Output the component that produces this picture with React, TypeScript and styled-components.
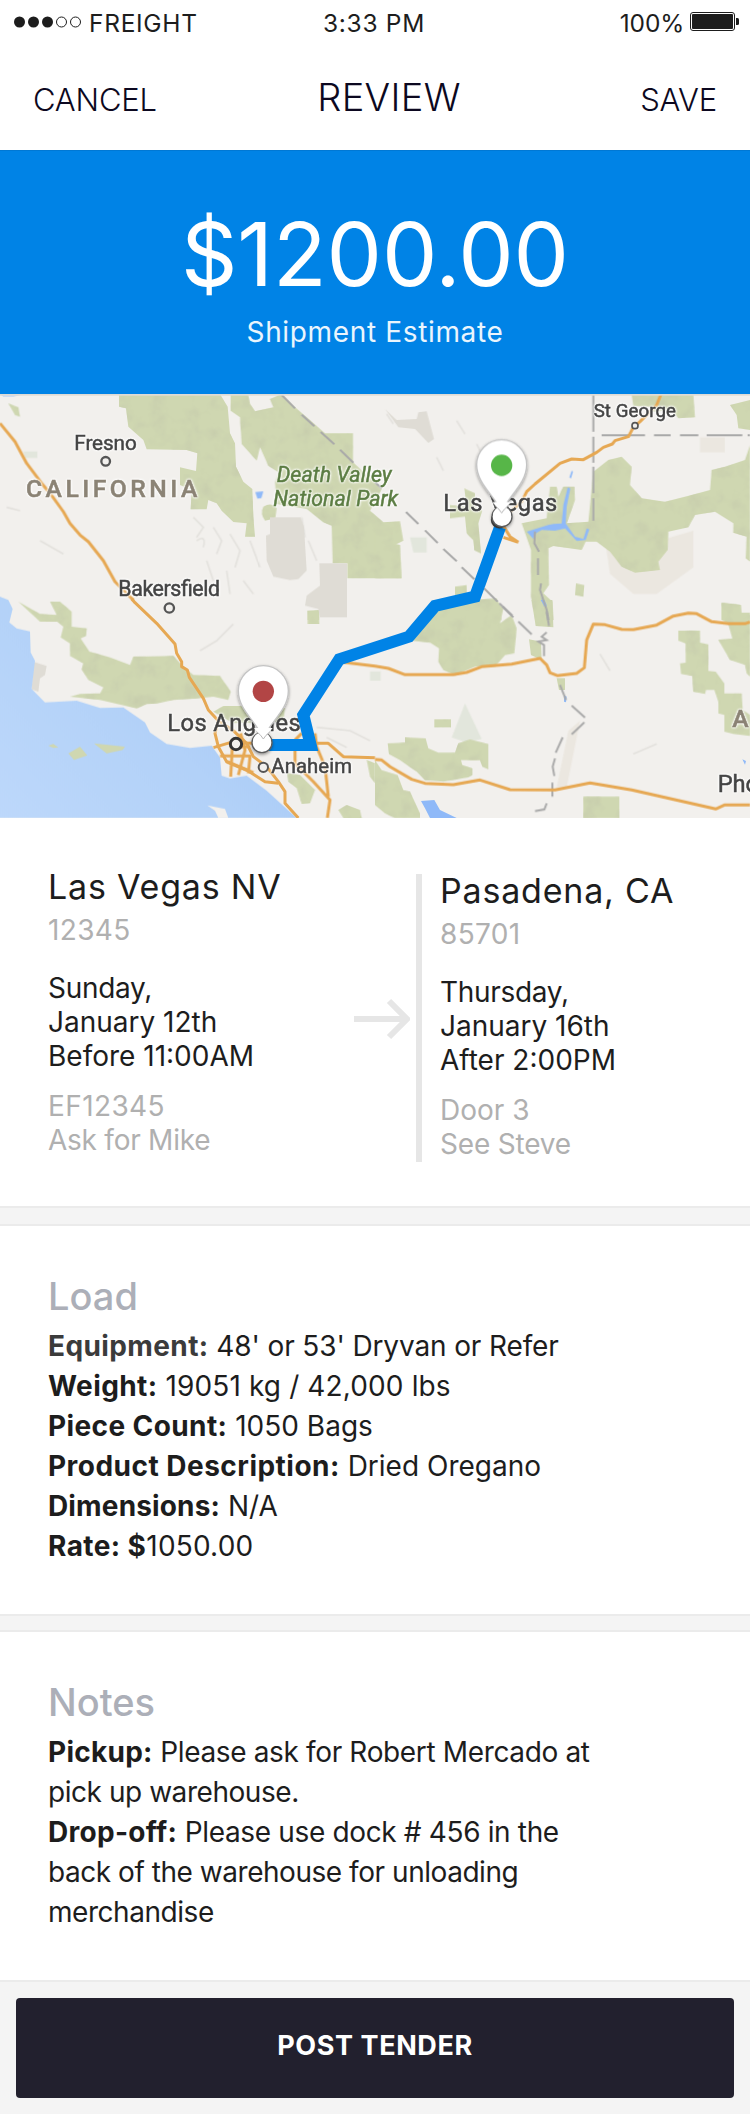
import React from 'react'
import styled, { createGlobalStyle } from 'styled-components'

const GlobalStyle = createGlobalStyle`
  body {
    margin: 0;
    background: #f4f4f4;
  }
  *, *::before, *::after {
    box-sizing: border-box;
  }
`

const Screen = styled.div`
  width: 750px;
  min-height: 2114px;
  display: flex;
  flex-direction: column;
  background: #f4f4f4;
  color: #1d1d1d;
  font-family: Inter, "Liberation Sans", sans-serif;
  font-size: 28px;
  line-height: 40px;
`

/* ---------- top bars ---------- */

const StatusBar = styled.div`
  display: grid;
  grid-template-columns: 1fr auto 1fr;
  align-items: center;
  height: 46px;
  padding: 0 11px 0 14px;
  background: #fff;
  font-size: 24.5px;
  line-height: 46px;
  letter-spacing: 0.7px;
`
const Carrier = styled.div`
  display: flex;
  align-items: center;
  gap: 7px;
`
const Clock = styled.span`
  margin-right: 5px;
`
const Power = styled.div`
  display: flex;
  align-items: center;
  justify-content: flex-end;
  gap: 6px;
  letter-spacing: -0.2px;
`
const StatusIcon = styled.svg`
  display: block;
  margin-bottom: 3px;
`

const NavBar = styled.nav`
  display: grid;
  grid-template-columns: 1fr auto 1fr;
  align-items: baseline;
  height: 104px;
  padding: 31px 33px 0;
  background: #fff;
  color: #0c0820;
`
const NavAction = styled.span<{ $right?: boolean }>`
  font-size: 31px;
  font-weight: 300;
  letter-spacing: -0.2px;
  text-align: ${({ $right }) => ($right ? 'right' : 'left')};
`
const NavTitle = styled.h1`
  margin: 0;
  padding-left: 28px;
  font-size: 38px;
  font-weight: 300;
  letter-spacing: 0.3px;
`

/* ---------- estimate ---------- */

const Estimate = styled.section`
  display: flex;
  flex-direction: column;
  align-items: center;
  height: 244px;
  padding-top: 54px;
  border-top: 1px solid #0078d4;
  background: #0083e6;
  color: #fff;
`
const Amount = styled.div`
  font-size: 88px;
  line-height: 98px;
  letter-spacing: -0.1px;
`
const AmountLabel = styled.div`
  margin-top: 9px;
  font-size: 28px;
  letter-spacing: 0.65px;
  color: #eaf5fd;
`

const MapFrame = styled.svg`
  display: block;
  width: 750px;
  height: 424px;
`

/* ---------- stops ---------- */

const Stops = styled.section`
  display: flex;
  align-items: flex-start;
  height: 388px;
  padding: 49px 48px 0;
  background: #fff;
`
const Stop = styled.div<{ $last?: boolean }>`
  width: ${({ $last }) => ($last ? '260px' : '306px')};
  margin: ${({ $last }) => ($last ? '4px 0 0 18px' : '0')};
  line-height: 34px;
`
const City = styled.h2`
  margin: 0 0 6px;
  font-size: 34px;
  font-weight: 400;
  line-height: 40px;
  letter-spacing: 0.8px;
`
const Muted = styled.div<{ $track?: number }>`
  color: #b0b0b0;
  letter-spacing: ${({ $track }) => $track ?? 0}px;
`
const When = styled.div`
  margin: 24px 0 16px;
`
const Day = styled.div`
  letter-spacing: -0.3px;
`
const StopArrow = styled.svg`
  display: block;
  margin-top: 131px;
`
const StopRule = styled.div`
  width: 6px;
  height: 288px;
  margin: 7px 0 0 6px;
  background: #e6e6e6;
`

/* ---------- detail cards ---------- */

const Card = styled.section`
  padding: 47px 48px 48px;
  background: #fff;
`
const Divider = styled.div<{ $tall?: boolean }>`
  height: ${({ $tall }) => ($tall ? '20px' : '18px')};
  flex: none;
  border: solid #ebebeb;
  border-width: 2px 0;
  background: #f4f4f4;
`
const CardTitle = styled.h2`
  margin: 0 0 7px;
  font-size: 38px;
  font-weight: 500;
  line-height: 46px;
  letter-spacing: 0;
  color: #acafb8;
`
const Line = styled.p<{ $track?: number }>`
  margin: 0;
  letter-spacing: ${({ $track }) => $track ?? 0}px;
  white-space: nowrap;
`
const Label = styled.strong<{ $soft?: boolean; $track?: number }>`
  font-weight: 700;
  letter-spacing: ${({ $track }) => $track ?? 0.4}px;
  color: ${({ $soft }) => ($soft ? '#3b3b3b' : 'inherit')};
`

const Footer = styled.footer`
  padding: 16px;
  border-top: 2px solid #ebebeb;
`
const PostButton = styled.button`
  display: block;
  width: 718px;
  height: 100px;
  border: 0;
  border-radius: 4px;
  background: #22202e;
  color: #fff;
  font: 700 27px/96px Inter, "Liberation Sans", sans-serif;
  letter-spacing: 0.6px;
  padding: 0 0 4px;
`

/* ---------- map ---------- */

// Map units are a third of a pixel. Shapes are grouped by quarter sheet.
const sheets = {
  nw: 'translate(0 -12)',
  ne: 'translate(1125 -12)',
  mid: 'translate(630 0)',
  sw: 'translate(0 618)',
  se: 'translate(1125 618)',
}
type Shape = [keyof typeof sheets, string]

const parks: Shape[] = [
  ['nw', 'M357 12H660L683 50L690 130L705 160L708 230L730 275L757 297L760 380L765 440H735L740 400L700 396L665 362L650 340L625 330L620 358H572L575 300L540 285V232L588 243L592 190L560 180L440 178L430 150L385 110L378 55L357 50Z'],
  ['nw', 'M25 40L55 52L60 80L45 75Z'],
  ['nw', 'M790 350Q815 335 830 355L826 385L795 392Q780 370 790 350Z'],
  ['nw', 'M922 662L958 660V690H922Z'],
  ['mid', 'M62 0H114L120 30L135 52L190 40L180 15L215 0L250 35L345 118H429V205L515 285L480 350L520 385L570 382L580 440L550 455V485L572 515L574 553H412V508H368L365 395L340 385L290 345L200 330L195 265L205 235L175 215L150 160L140 200L95 150L90 70L62 50Z'],
  ['mid', 'M293 652L326 650L328 690H293Z'],
  ['ne', 'M0 385L15 400L50 397L53 460L75 465L80 565H0Z'],
  ['ne', 'M268 295L300 310L298 350L322 362L310 400L318 490L298 480L295 450L275 430L270 380L225 385V345L275 350Z'],
  ['ne', 'M770 12H955L960 82L910 85L890 60L835 65L830 50L775 48Z'],
  ['ne', 'M1065 45L1125 30V120L1090 115L1085 75Z'],
  ['ne', 'M655 245L700 210L740 200L770 230L765 285L800 325L870 335L950 315L1005 300L1010 240L1050 230L1110 210L1125 165V515L1112 505L1115 440L1075 428V400L1020 365L960 375L940 412L880 425L878 480L850 515L855 540L780 548L740 530L705 485L665 455L632 455L620 480L535 468L520 475L522 585L505 610L532 635L535 690H482L468 620V480L440 400L515 385L525 290L545 290L550 320L565 290H598L600 330L575 400L640 395Z'],
  ['ne', 'M240 590L275 585V612L240 618ZM603 580L628 585L625 620L600 615Z'],
  ['ne', 'M180 690L190 650L300 630L365 625L380 690Z'],
  ['ne', 'M1040 640L1098 645L1100 672L1125 675V690H1040Z'],
  ['se', 'M185 30L300 5L365 0L385 25L375 70L410 45L425 85L418 160L390 165L360 200L300 200L240 225L205 210L190 185L192 145L165 128L110 122Z'],
  ['se', 'M470 0H532L535 82L482 78ZM462 118L498 125L500 180L468 165ZM545 235H570V270H552Z'],
  ['se', 'M1040 8L1095 15V38H1125V230L1115 220L1110 195L1065 180L1030 120L1072 115L1060 72L1040 60Z'],
  ['se', 'M910 92H975V128L1000 133V213L1022 215L1048 250V280H1100L1103 330L1125 345V408L1075 402L1048 395V345L1030 340V305L1018 270H993L990 282L955 275L952 228L918 222L915 190L932 188V130L910 122Z'],
  ['se', 'M178 358H228V382H178ZM625 590H733V654H625Z'],
  ['se', 'M38 430L90 428V412L152 415L160 445L190 458H240L250 430L285 418L340 432V508L322 500L315 480H258L262 495L292 505V525L280 532L205 545L150 540L125 515L75 480L42 462Z'],
  ['se', 'M0 480L20 510L68 525L85 570L105 575L135 640V654H60L30 640L0 615Z'],
  ['sw', 'M55 5L120 42L170 45L150 5H180L215 35V80L260 85L258 108L242 115L268 155L330 172L390 195L400 170L520 168L550 200L580 225L660 228L692 275L685 300L640 290L590 295L520 300L470 310L440 312L410 325L300 300L210 290L240 282L300 280L310 262L265 240L245 208L250 190L210 168V130L182 112L190 80L172 65L120 65Z'],
  ['sw', 'M640 335L670 318H760L855 325L850 365L700 370Z'],
  ['sw', 'M862 520L900 525L945 570L930 610L905 612L890 565L865 545ZM1015 630L1040 615L1080 630L1085 654H1030ZM1100 480L1125 490V550L1110 530Z'],
]

const islands: Shape[] = [
  ['sw', 'M205 460L240 440L262 466L222 480ZM282 430L375 440L368 450L320 460ZM145 437L160 432L175 442L160 444Z'],
]

const desert: Shape[] = [
  ['mid', 'M180 370H272L282 400L290 530L265 555L240 558L190 548L170 500L168 425L180 420Z'],
  ['mid', 'M328 508H411V670H330L325 645L285 635L290 605L330 575Z'],
  ['mid', 'M525 45L560 78L620 75L625 55L650 52L672 135L655 147L615 105L565 100Z'],
  ['sw', 'M100 185L140 198L135 225L120 235L115 275L95 268Z'],
]

const freeways: Shape[] = [
  ['nw', 'M0 100L45 155L80 220L125 280L152 312L190 365L210 400L240 435L265 455L310 512L345 575L400 630'],
  ['sw', 'M395 -4L405 8L470 70L525 132L530 160L545 185V200L562 210L568 232L610 295L625 330L655 362L700 392L740 430L760 470L800 500L835 545L855 575V610L895 654'],
  ['sw', 'M655 362L645 400L655 440L680 485L740 510L795 545L835 550'],
  ['sw', 'M640 443L690 428L760 430H985L1030 470L1125 473'],
  ['sw', 'M660 468H750L745 520M680 485L760 518M697 440L692 530M722 400L735 450L715 525M690 440L750 440M885 450V490L940 545L990 600L982 654M945 400L950 440L975 500L985 590M885 420L905 400'],
  ['ne', 'M858 12L845 45L795 95L775 112L760 140L720 152L712 162L685 172L665 187L625 209L590 207L555 220L480 282L455 305L440 335L400 370L380 400L405 440L430 457M385 442L430 457'],
  ['se', 'M-110 185L0 198L40 205L90 224H235L275 217L320 200L410 192L495 175L515 195L525 218L548 227L605 220L628 203L635 120L655 72L690 74L740 88L775 89L845 75L895 48L940 39L965 41L1010 65L1060 71H1110L1125 66'],
  ['se', 'M0 478L20 480L45 500L110 538L150 550L235 554L315 540L405 569L540 570L645 549L770 570L1022 627L1048 615H1125'],
]

const borders: Shape[] = [
  ['mid', 'M215 3L255 43M275 62L313 97M332 114L373 151M390 167L430 206M495 265L515 283M588 354L625 390M645 409L683 447M700 465L740 502'],
  ['ne', 'M260 532L298 568M327 595L368 635M383 650L415 682M655 12V125M655 140V218M655 230V310M655 325V392M680 136H810M837 136H887M915 136H970M995 136H1102M1118 136H1125M480 425L478 460L492 485M489 505V555M498 580L495 600L505 630L515 660L520 690'],
  ['se', 'M373 10L412 47M430 65L470 103M515 97L500 110L515 120L490 125L507 135V168M515 35L522 78M555 255L573 300M590 317L630 353M628 367L590 403M563 412L542 458M540 475L533 500L538 528M532 548V590M515 610L508 628L480 633'],
]

const rivers: Shape[] = [
  ['nw', 'M766 306L790 304L784 324L772 326Z'],
  ['ne', 'M455 425L520 405L535 402L560 400L565 345L578 292L586 295L575 350L572 400L600 440L625 447L635 415L643 418L632 450L605 453L570 415L540 422L500 420L482 430L475 447ZM583 262L590 242L594 245L588 265ZM498 620L515 645L508 650Z'],
  ['se', 'M138 603L178 600L195 630L245 654H165L150 625ZM497 0H508L515 20L508 18ZM567 285L575 290L573 307L567 305ZM1102 478L1113 483L1110 494Z'],
]

const Sheet: React.FC<{ shapes: Shape[] }> = ({ shapes }) => (
  <>
    {shapes.map(([sheet, d]) => (
      <path key={d} transform={sheets[sheet]} d={d} />
    ))}
  </>
)

const Place = styled.text<{ $kind?: 'park' | 'state' }>`
  font-family: Roboto, "Liberation Sans", sans-serif;
  font-weight: ${({ $kind }) => ($kind === 'state' ? 500 : 400)};
  font-style: ${({ $kind }) => ($kind === 'park' ? 'italic' : 'normal')};
  fill: ${({ $kind }) => (!$kind ? '#444' : $kind === 'park' ? '#5c7d43' : '#8b8375')};
  stroke: ${({ $kind }) => (!$kind ? '#444' : $kind === 'park' ? '#5c7d43' : '#8b8375')};
  stroke-width: 1.5px;
  filter: drop-shadow(0 0 3px #fff) drop-shadow(0 0 3px #fff);
`

interface PinProps {
  x: number
  y: number
  baseX: number
  color: string
}

const Pin: React.FC<PinProps> = ({ x, y, baseX, color }) => (
  <g transform={`translate(${x} ${y})`}>
    <circle cx={baseX} cy="154" r="30" fill="#fff" stroke="#5c5c5c" strokeWidth="4" filter="url(#drop)" />
    <path
      d="M0 143C-14 96-75 58-75 -2A75 75 0 0 1 75 -2C75 58 14 96 0 143Z"
      fill="#fff"
      stroke="#c4c4c4"
      strokeWidth="4"
      filter="url(#drop)"
    />
    <circle cx={baseX} cy="150" r="27" fill="#fff" />
    <path d="M-28 110L0 143L28 110Z" fill="#fff" />
    <path d="M-20 121Q-6 132 0 143Q6 132 20 121" fill="none" stroke="#b9b9b9" strokeWidth="3" />
    <circle r="32" fill={color} />
  </g>
)

const RouteMap: React.FC = () => (
  <MapFrame viewBox="0 0 2250 1272">
    <defs>
      <linearGradient id="ocean" x1="0" y1="1" x2="1" y2="0.3">
        <stop offset="0" stopColor="#bdd8fb" />
        <stop offset="0.55" stopColor="#b2d1f8" />
        <stop offset="1" stopColor="#a3c7f6" />
      </linearGradient>
      <filter id="drop" x="-30%" y="-30%" width="160%" height="160%">
        <feDropShadow dx="0" dy="4" stdDeviation="5" floodColor="#000" floodOpacity="0.4" />
      </filter>
      <filter id="relief" x="0" y="0" width="100%" height="100%">
        <feTurbulence type="fractalNoise" baseFrequency="0.02" numOctaves="3" seed="4" />
        <feColorMatrix values="0 0 0 0 0.58  0 0 0 0 0.62  0 0 0 0 0.42  2.6 0 0 0 -1.25" result="hills" />
        <feComposite in="hills" in2="SourceAlpha" operator="in" result="shade" />
        <feMerge>
          <feMergeNode in="SourceGraphic" />
          <feMergeNode in="shade" />
        </feMerge>
      </filter>
      <filter id="soft">
        <feGaussianBlur stdDeviation="1.4" />
      </filter>
    </defs>

    <rect width="2250" height="1272" fill="#f2f0ed" />
    <g filter="url(#soft)">
      <g fill="#ebe7e0">
        <path d="M1815 440L1875 470L2080 410L2080 520L1970 600H1900L1830 540Z" />
        <path d="M1705 1010L1740 980L1700 1180H1670Z" />
        <path d="M2100 130H2175V175H2100Z" />
      </g>
      <g fill="#e2e6dc">
        <path d="M1395 928L1355 1030L1400 1045L1445 1035ZM1230 430H1280V475H1240ZM70 172H112V192H75ZM1110 832H1142V860H1110Z" />
      </g>
      <path
        fill="none"
        stroke="#e3e1dd"
        strokeWidth="5"
        d="M580 370L610 400L590 430M640 400L665 440L650 480M690 420L720 470L705 520M620 500L640 560M680 530L690 600M590 440Q620 420 610 460M750 440L780 520M730 560L760 600M800 160L815 220M905 370L915 430M925 440L950 500M1160 60L1180 90M1370 80L1395 120M1430 150L1450 190M1310 190L1330 230M600 770L650 740L700 690M20 340L60 350M120 440L190 480M950 1000L1050 1010L1110 1040M980 1030L1040 1060M1900 1080L1970 1050M1800 780L1830 830"
      />
      <g fill="#cfd7b1" filter="url(#relief)">
        <Sheet shapes={parks} />
      </g>
      <g fill="#dfdcd5">
        <Sheet shapes={desert} />
      </g>
      <path
        fill="url(#ocean)"
        d="M0 608L25 618L38 645L28 685L50 703L90 712L92 775L105 800L95 885L135 925L230 920L300 942L370 940L435 985L450 1015L500 1050L570 1062L635 1055L660 1090L665 1145L690 1153L740 1145L800 1190L890 1272H0Z"
      />
      <path fill="#93bcf7" opacity="0.5" d="M0 0H75L40 8L10 8Z" />
      <path fill="#f2f0ed" d="M622 1234L675 1245L685 1272H655L645 1250Z" />
      <g fill="#cfd7b1">
        <Sheet shapes={islands} />
      </g>
      <g fill="#8fb9f8">
        <Sheet shapes={rivers} />
      </g>
      <g fill="none" stroke="#a9a9a9" strokeWidth="6">
        <Sheet shapes={borders} />
      </g>
      <g fill="none" stroke="#e6a853" strokeWidth="9" strokeLinejoin="round">
        <Sheet shapes={freeways} />
      </g>
    </g>
    <rect width="2250" height="5" fill="#dedbd6" />

    <g fill="#f2f0ed" stroke="#555" strokeWidth="7">
      <circle cx="317" cy="202" r="13" />
      <circle cx="508" cy="642" r="14" />
      <circle cx="1905" cy="95" r="9" strokeWidth="5" />
      <circle cx="708" cy="1050" r="17" strokeWidth="9" stroke="#333" />
      <circle cx="790" cy="1120" r="14" strokeWidth="6" />
    </g>

    <Place x="223" y="168" fontSize="62" textLength="187">Fresno</Place>
    <Place $kind="state" x="78" y="308" fontSize="74" textLength="514">CALIFORNIA</Place>
    <Place $kind="park" x="830" y="264" fontSize="64" textLength="345">Death Valley</Place>
    <Place $kind="park" x="820" y="336" fontSize="64" textLength="374">National Park</Place>
    <Place x="355" y="606" fontSize="64" textLength="305">Bakersfield</Place>
    <Place x="1781" y="68" fontSize="56" textLength="247">St George</Place>
    <Place x="1330" y="352" fontSize="71" textLength="342">Las Vegas</Place>
    <Place x="502" y="1010" fontSize="71" textLength="400">Los Angeles</Place>
    <Place x="814" y="1136" fontSize="61" textLength="242">Anaheim</Place>
    <Place $kind="state" x="2197" y="1000" fontSize="74">A</Place>
    <Place x="2153" y="1195" fontSize="71">Pho</Place>

    <path
      d="M1500 400L1425 608L1305 636L1227 728L1018 796L910 963L932 1053H800"
      fill="none"
      stroke="#0083e6"
      strokeWidth="36"
    />
    <circle cx="1498" cy="378" r="22" fill="#777" stroke="#444" strokeWidth="7" />
    <Pin x={1505} y={214} baseX={1} color="#57b648" />
    <Pin x={790} y={892} baseX={-4} color="#b24545" />
  </MapFrame>
)

const App: React.FC = () => {
  return (
    <>
      <GlobalStyle />
      <Screen>
        <StatusBar>
          <Carrier>
            <StatusIcon width="68" height="12" viewBox="0 0 68 12">
              {[0, 1, 2, 3, 4].map(i => (
                <circle
                  key={i}
                  cx={5.5 + i * 14}
                  cy="6"
                  r={i < 3 ? 5.5 : 5}
                  fill={i < 3 ? '#1d1d1d' : 'none'}
                  stroke={i < 3 ? 'none' : '#1d1d1d'}
                />
              ))}
            </StatusIcon>
            <span>FREIGHT</span>
          </Carrier>
          <Clock>3:33 PM</Clock>
          <Power>
            <span>100%</span>
            <StatusIcon width="49" height="19" viewBox="0 0 49 19">
              <rect x="0.5" y="0.5" width="44" height="18" rx="2.5" fill="none" stroke="#1d1d1d" />
              <rect x="2" y="2" width="41" height="15" rx="1" fill="#1d1d1d" />
              <path d="M46 6H47.5Q49 6 49 7.5V11.5Q49 13 47.5 13H46Z" fill="#1d1d1d" />
            </StatusIcon>
          </Power>
        </StatusBar>
        <NavBar>
          <NavAction>CANCEL</NavAction>
          <NavTitle>REVIEW</NavTitle>
          <NavAction $right>SAVE</NavAction>
        </NavBar>

        <Estimate>
          <Amount>$1200.00</Amount>
          <AmountLabel>Shipment Estimate</AmountLabel>
        </Estimate>

        <RouteMap />

        <Stops>
          <Stop>
            <City>Las Vegas NV</City>
            <Muted $track={0.35}>12345</Muted>
            <When>
              <Day>Sunday,</Day>
              January 12th<br />
              Before 11:00AM
            </When>
            <Muted $track={0.4}>EF12345</Muted>
            <Muted $track={-0.25}>Ask for Mike</Muted>
          </Stop>
          <StopArrow width="56" height="42" viewBox="0 0 56 42">
            <path d="M0 21H52M35 3L53 21L35 39" fill="none" stroke="#e6e6e6" strokeWidth="6" />
          </StopArrow>
          <StopRule />
          <Stop $last>
            <City>Pasadena, CA</City>
            <Muted $track={0.35}>85701</Muted>
            <When>
              <Day>Thursday,</Day>
              January 16th<br />
              After 2:00PM
            </When>
            <Muted>Door 3</Muted>
            <Muted $track={-0.2}>See Steve</Muted>
          </Stop>
        </Stops>
        <Divider $tall />

        <Card>
          <CardTitle>Load</CardTitle>
          <Line $track={-0.13}><Label $soft>Equipment:</Label> 48' or 53' Dryvan or Refer</Line>
          <Line $track={0.13}><Label>Weight:</Label> 19051 kg / 42,000 lbs</Line>
          <Line><Label>Piece Count:</Label> 1050 Bags</Line>
          <Line><Label $track={0.48}>Product Description:</Label> Dried Oregano</Line>
          <Line><Label $track={0.15}>Dimensions:</Label> N/A</Line>
          <Line $track={0.2}><Label>Rate: $</Label>1050.00</Line>
        </Card>
        <Divider />

        <Card>
          <CardTitle>Notes</CardTitle>
          <Line $track={-0.35}><Label $track={0.25}>Pickup:</Label> Please ask for Robert Mercado at</Line>
          <Line $track={-0.45}>pick up warehouse.</Line>
          <Line $track={-0.35}><Label $track={0.3}>Drop-off:</Label> Please use dock # 456 in the</Line>
          <Line $track={-0.46}>back of the warehouse for unloading</Line>
          <Line $track={-0.45}>merchandise</Line>
        </Card>

        <Footer>
          <PostButton>POST TENDER</PostButton>
        </Footer>
      </Screen>
    </>
  )
}

export default App
